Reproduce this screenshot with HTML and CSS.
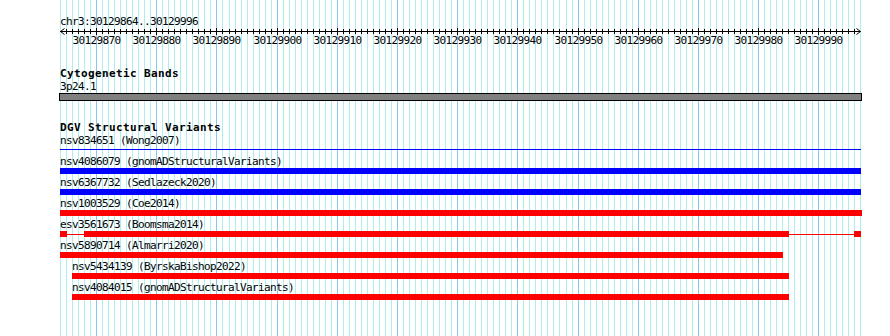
FILE: index.html
```html
<!DOCTYPE html>
<html>
<head>
<meta charset="utf-8">
<title>Genome view</title>
<link rel="stylesheet" href="styles.css">
</head>
<body>
<div class="view">
  <svg class="grid" id="grid" width="890" height="336"></svg>
  <div class="content">
    <div class="txt chrom">chr3:30129864..30129996</div>
    <div class="ruler">
      <svg class="ruler-svg" id="rulerSvg" width="804" height="9"></svg>
      <div class="ruler-labels" id="rulerLabels"></div>
    </div>

    <section class="track cyto">
      <h2 class="track-title">Cytogenetic Bands</h2>
      <div class="txt">3p24.1</div>
      <div class="band"></div>
    </section>

    <section class="track dgv">
      <h2 class="track-title">DGV Structural Variants</h2>

      <div class="feature">
        <div class="txt">nsv834651 (Wong2007)</div>
        <div class="glyph"><div class="seg thin blue-line" style="left:0;width:801px"></div></div>
      </div>

      <div class="feature">
        <div class="txt">nsv4086079 (gnomADStructuralVariants)</div>
        <div class="glyph"><div class="seg blue" style="left:0;width:801px"></div></div>
      </div>

      <div class="feature">
        <div class="txt">nsv6367732 (Sedlazeck2020)</div>
        <div class="glyph"><div class="seg blue" style="left:0;width:801px"></div></div>
      </div>

      <div class="feature">
        <div class="txt">nsv1003529 (Coe2014)</div>
        <div class="glyph"><div class="seg red" style="left:0;width:802px"></div></div>
      </div>

      <div class="feature">
        <div class="txt">esv3561673 (Boomsma2014)</div>
        <div class="glyph">
          <div class="seg red-line connector" style="left:7px;width:17px"></div>
          <div class="seg red-line connector" style="left:729px;width:65px"></div>
          <div class="seg red" style="left:0;width:7px"></div>
          <div class="seg red" style="left:24px;width:705px"></div>
          <div class="seg red" style="left:794px;width:7px"></div>
        </div>
      </div>

      <div class="feature">
        <div class="txt">nsv5890714 (Almarri2020)</div>
        <div class="glyph"><div class="seg red" style="left:0;width:723px"></div></div>
      </div>

      <div class="feature">
        <div class="txt" style="margin-left:12px">nsv5434139 (ByrskaBishop2022)</div>
        <div class="glyph"><div class="seg red" style="left:12px;width:717px"></div></div>
      </div>

      <div class="feature">
        <div class="txt" style="margin-left:12px">nsv4084015 (gnomADStructuralVariants)</div>
        <div class="glyph"><div class="seg red" style="left:12px;width:717px"></div></div>
      </div>
    </section>
  </div>
</div>
<script src="script.js"></script>
</body>
</html>
```

FILE: styles.css
```css
* {
  box-sizing: border-box;
  margin: 0;
  padding: 0;
}

body {
  margin: 0;
  background: #ffffff;
  color: #000000;
  font-family: "DejaVu Sans Mono", "Liberation Mono", monospace;
  font-size: 11px;
  width: 890px;
  height: 336px;
  overflow: hidden;
}

.view {
  position: relative;
  width: 890px;
  height: 336px;
}

.grid {
  position: absolute;
  left: 0;
  top: 0;
}

.gmin {
  stroke: #afeeee;
  stroke-width: 1;
}

.gmaj {
  stroke: #87c8ef;
  stroke-width: 1;
}

.content {
  position: relative;
  margin-left: 60px;
  padding-top: 15px;
  width: 802px;
}

.txt {
  height: 13px;
  line-height: 13px;
  letter-spacing: -0.62px;
  white-space: nowrap;
}

.ruler {
  position: relative;
  height: 19px;
}

.ruler-svg {
  position: absolute;
  left: 0;
  top: 0;
  overflow: visible;
}

.ruler-svg line,
.ruler-svg polyline {
  stroke: #000000;
  stroke-width: 1;
  fill: none;
}

.tick-label {
  position: absolute;
  top: 6px;
  height: 13px;
  line-height: 13px;
  letter-spacing: -0.62px;
  white-space: nowrap;
  transform: translateX(-50%);
}

.track {
  margin-top: 20px;
}

.track-title {
  font-size: 11px;
  font-weight: bold;
  height: 13px;
  line-height: 13px;
  letter-spacing: 0.38px;
  white-space: nowrap;
}

.band {
  margin-left: -1px;
  width: 803px;
  height: 8px;
  background: #808080;
  border: 1px solid #000000;
}

.feature {
  height: 21px;
}

.glyph {
  position: relative;
  height: 6px;
  width: 802px;
}

.seg {
  position: absolute;
  top: 0;
  height: 6px;
}

.seg.blue {
  background: #0000ff;
}

.seg.red {
  background: #ff0000;
}

.seg.thin {
  top: 2px;
  height: 1px;
}

.seg.blue-line {
  background: #0000ff;
}

.seg.connector {
  top: 3px;
  height: 1px;
}

.seg.red-line {
  background: #ff0000;
}
```

FILE: script.js
```js
(function () {
  var X0 = 60, PX = 6.018, N = 133, START = 30129864;
  var grid = document.getElementById('grid');
  var rs = document.getElementById('rulerSvg');
  var labels = document.getElementById('rulerLabels');
  var g = '', r = '';
  for (var i = 0; i <= N; i++) {
    var xi = Math.round(X0 + i * PX);
    var major = (START + i) % 10 === 0;
    g += '<line class="' + (major ? 'gmaj' : 'gmin') + '" x1="' + (xi + 0.5) + '" y1="0" x2="' + (xi + 0.5) + '" y2="336"/>';
    var rx = xi - X0 + 0.5;
    if (i > 0 && i < N) {
      r += '<line x1="' + rx + '" y1="' + (major ? 0 : 1) + '" x2="' + rx + '" y2="' + (major ? 7 : 6) + '"/>';
    }
    if (major) {
      var s = document.createElement('span');
      s.className = 'tick-label';
      s.style.left = (xi - X0 + 0.5) + 'px';
      s.textContent = String(START + i);
      labels.appendChild(s);
    }
  }
  var end = Math.round(X0 + N * PX) - X0 + 0.5;
  r += '<line x1="0" y1="3.5" x2="' + end + '" y2="3.5"/>';
  r += '<polyline points="4.5,0.5 0.5,3.5 4.5,6.5"/>';
  r += '<polyline points="' + (end - 4) + ',0.5 ' + end + ',3.5 ' + (end - 4) + ',6.5"/>';
  grid.innerHTML = g;
  rs.innerHTML = r;
})();
```
